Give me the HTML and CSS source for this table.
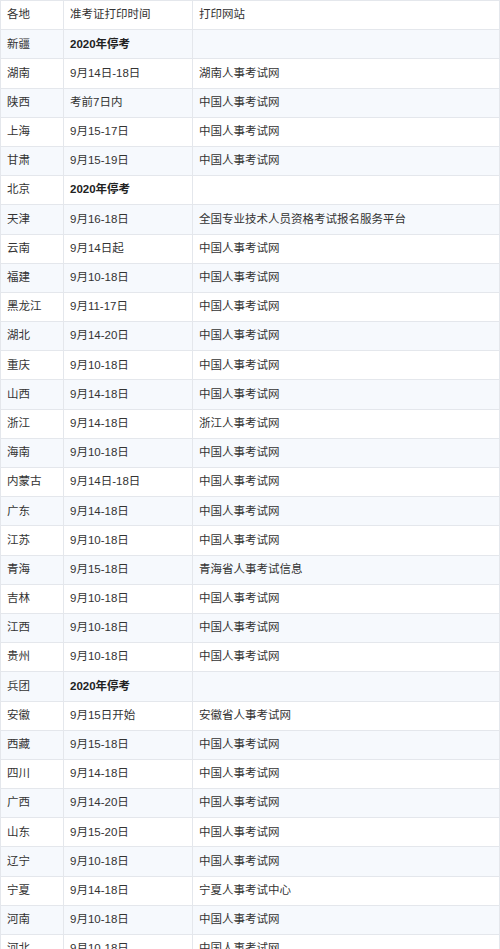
FILE: index.html
```html
<!DOCTYPE html>
<html lang="zh">
<head>
<meta charset="utf-8">
<link rel="stylesheet" href="styles.css">
</head>
<body>
<table class="exam">
<colgroup><col class="c1"><col class="c2"><col class="c3"></colgroup>
<tbody>
<tr><td>各地</td><td>准考证打印时间</td><td>打印网站</td></tr>
<tr><td>新疆</td><td class="b">2020年停考</td><td></td></tr>
<tr><td>湖南</td><td>9月14日-18日</td><td>湖南人事考试网</td></tr>
<tr><td>陕西</td><td>考前7日内</td><td>中国人事考试网</td></tr>
<tr><td>上海</td><td>9月15-17日</td><td>中国人事考试网</td></tr>
<tr><td>甘肃</td><td>9月15-19日</td><td>中国人事考试网</td></tr>
<tr><td>北京</td><td class="b">2020年停考</td><td></td></tr>
<tr><td>天津</td><td>9月16-18日</td><td>全国专业技术人员资格考试报名服务平台</td></tr>
<tr><td>云南</td><td>9月14日起</td><td>中国人事考试网</td></tr>
<tr><td>福建</td><td>9月10-18日</td><td>中国人事考试网</td></tr>
<tr><td>黑龙江</td><td>9月11-17日</td><td>中国人事考试网</td></tr>
<tr><td>湖北</td><td>9月14-20日</td><td>中国人事考试网</td></tr>
<tr><td>重庆</td><td>9月10-18日</td><td>中国人事考试网</td></tr>
<tr><td>山西</td><td>9月14-18日</td><td>中国人事考试网</td></tr>
<tr><td>浙江</td><td>9月14-18日</td><td>浙江人事考试网</td></tr>
<tr><td>海南</td><td>9月10-18日</td><td>中国人事考试网</td></tr>
<tr><td>内蒙古</td><td>9月14日-18日</td><td>中国人事考试网</td></tr>
<tr><td>广东</td><td>9月14-18日</td><td>中国人事考试网</td></tr>
<tr><td>江苏</td><td>9月10-18日</td><td>中国人事考试网</td></tr>
<tr><td>青海</td><td>9月15-18日</td><td>青海省人事考试信息</td></tr>
<tr><td>吉林</td><td>9月10-18日</td><td>中国人事考试网</td></tr>
<tr><td>江西</td><td>9月10-18日</td><td>中国人事考试网</td></tr>
<tr><td>贵州</td><td>9月10-18日</td><td>中国人事考试网</td></tr>
<tr><td>兵团</td><td class="b">2020年停考</td><td></td></tr>
<tr><td>安徽</td><td>9月15日开始</td><td>安徽省人事考试网</td></tr>
<tr><td>西藏</td><td>9月15-18日</td><td>中国人事考试网</td></tr>
<tr><td>四川</td><td>9月14-18日</td><td>中国人事考试网</td></tr>
<tr><td>广西</td><td>9月14-20日</td><td>中国人事考试网</td></tr>
<tr><td>山东</td><td>9月15-20日</td><td>中国人事考试网</td></tr>
<tr><td>辽宁</td><td>9月10-18日</td><td>中国人事考试网</td></tr>
<tr><td>宁夏</td><td>9月14-18日</td><td>宁夏人事考试中心</td></tr>
<tr><td>河南</td><td>9月10-18日</td><td>中国人事考试网</td></tr>
<tr><td>河北</td><td>9月10-18日</td><td>中国人事考试网</td></tr>
</tbody>
</table>
</body>
</html>
```
FILE: styles.css
```css
html, body {
  margin: 0;
  padding: 0;
  background: #ffffff;
}
.exam {
  border-collapse: collapse;
  table-layout: fixed;
  width: 499px;
  font-family: "Liberation Sans", "Noto Sans CJK SC", sans-serif;
  font-size: 11.5px;
  color: #333333;
}
.c1 { width: 63px; }
.c2 { width: 129px; }
.c3 { width: 307px; }
.exam td {
  height: 28.2px;
  padding: 0 0 0 6px;
  border: 1px solid #e4e7ec;
  white-space: nowrap;
  vertical-align: middle;
  line-height: 1;
}
.exam tr:nth-child(even) td {
  background: #f6f9fd;
}
.exam td.b {
  font-weight: bold;
  color: #222222;
}
```
